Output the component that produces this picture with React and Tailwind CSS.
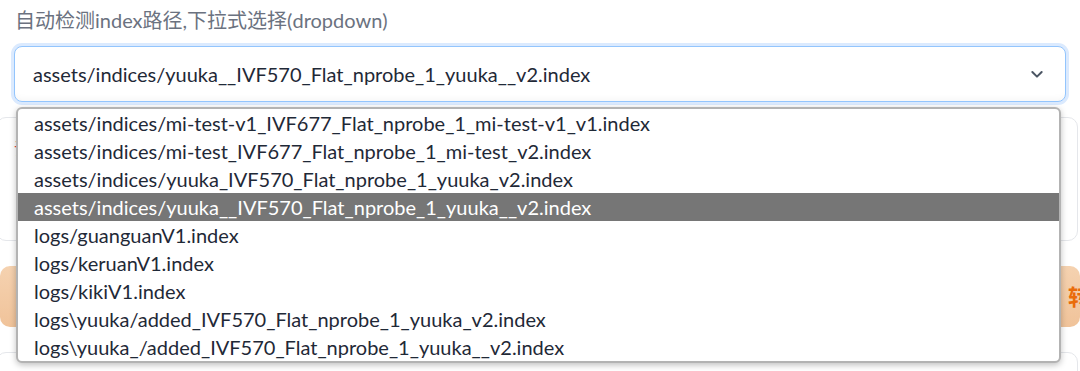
import React from 'react';

const options = [
  'assets/indices/mi-test-v1_IVF677_Flat_nprobe_1_mi-test-v1_v1.index',
  'assets/indices/mi-test_IVF677_Flat_nprobe_1_mi-test_v2.index',
  'assets/indices/yuuka_IVF570_Flat_nprobe_1_yuuka_v2.index',
  'assets/indices/yuuka__IVF570_Flat_nprobe_1_yuuka__v2.index',
  'logs/guanguanV1.index',
  'logs/keruanV1.index',
  'logs/kikiV1.index',
  'logs\\yuuka/added_IVF570_Flat_nprobe_1_yuuka_v2.index',
  'logs\\yuuka_/added_IVF570_Flat_nprobe_1_yuuka__v2.index',
];

const selected = 3;

export default function App() {
  return (
    <div
      className="w-[1080px] h-[371px] overflow-hidden bg-white"
      style={{ fontFamily: 'Lato, "Noto Sans CJK SC", sans-serif' }}
    >
      <div className="px-[14px] pt-[8px]">
        <div className="text-[20px] text-[#6b7280] leading-[24px] pl-[1px]">
          自动检测index路径,下拉式选择(dropdown)
        </div>

        <div className="mt-[14px] h-[56px] rounded-[8px] border border-[#93c5fd] ring-[3px] ring-[#dbeafe] bg-white flex items-center justify-between pl-[18px] pr-[20px] shadow-[inset_0_-6px_8px_-6px_rgba(0,0,0,0.06)]">
          <span className="text-[20px] text-[#1f2937]">
            assets/indices/yuuka__IVF570_Flat_nprobe_1_yuuka__v2.index
          </span>
          <svg width="16" height="16" viewBox="0 0 24 24" fill="none" stroke="#4b5563" strokeWidth="3" strokeLinecap="round" strokeLinejoin="round">
            <path d="M5 9l7 7 7-7" />
          </svg>
        </div>
      </div>

      <div className="relative mt-[15px]">
        {/* content behind the open dropdown */}
        <div className="mx-[-4px] mr-[2px] h-[124px] rounded-[10px] border border-[#e5e7eb] bg-white pl-[17px] pt-[18px]">
          <span className="text-[17px] text-[#ef4444]">识</span>
        </div>
        <div className="mt-[25px] h-[61px] rounded-[10px] bg-gradient-to-b from-[#f5d2b0] to-[#f0c39a] flex justify-end items-center overflow-hidden">
          <span className="text-[22px] font-bold text-[#ea6c0a] mr-[-10px]">转</span>
        </div>
        <div className="mt-[25px] h-[40px] mx-[-4px] mr-[2px] rounded-[10px] border border-[#e5e7eb] bg-white" />

        {/* open native-style listbox */}
        <div className="absolute left-[16px] top-[-10px] w-[1045px] rounded-[6px] border-2 border-[#b3b3b3] bg-white shadow-[0_2px_6px_rgba(0,0,0,0.25)] overflow-hidden">
          {options.map((o, i) => (
            <div
              key={o}
              className={
                'h-[28px] leading-[28px] pl-[16px] text-[20px] whitespace-nowrap ' +
                (i === selected ? 'bg-[#767676] text-white' : 'text-[#1f2937]')
              }
            >
              {o}
            </div>
          ))}
        </div>
      </div>
    </div>
  );
}
